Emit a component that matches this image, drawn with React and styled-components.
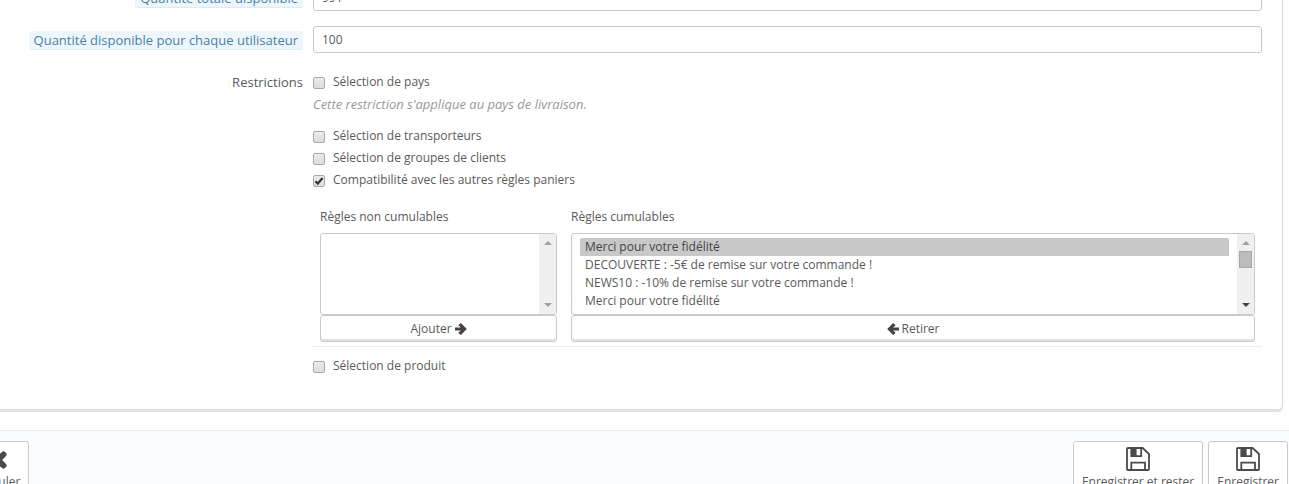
import React from "react";
import styled, { createGlobalStyle, css } from "styled-components";

const GlobalStyle = createGlobalStyle`
  *, *::before, *::after { box-sizing: border-box; }
  body {
    margin: 0;
    overflow: hidden;
    background: #fff;
    color: #5a5a5a;
    font: 12px/18px "Open Sans", "Noto Sans", sans-serif;
  }
  button, input, select { font: inherit; color: inherit; }
`;

const Page = styled.div`
  overflow: hidden;
`;

const Panel = styled.main`
  margin: -21px 6px 20px -6px;
  padding: 4px 20px 15px 6px;
  border: 1px solid #dcdcdc;
  border-radius: 5px;
  box-shadow: 0 2px 0 #e3e3e3;
`;

const FormRow = styled.div`
  display: grid;
  grid-template-columns: 302px minmax(0, 1fr);
  column-gap: 10px;
  align-items: start;
  margin-bottom: 15px;
`;

const LabelCell = styled.div`
  display: flex;
  justify-content: flex-end;
  padding-top: 5px;
  font-size: 13px;
`;

const HintLabel = styled.label`
  padding: 0 5px;
  border-bottom: 1px solid #d8edf7;
  border-radius: 3px;
  background: #edf7fb;
  color: #4a7fa5;
`;

const TextInput = styled.input`
  width: 100%;
  height: 27px;
  padding: 0 8px;
  border: 1px solid #c7cace;
  border-radius: 3px;
  background: #fff;
  outline: none;
`;

const Options = styled.div`
  min-width: 0;
  padding-top: 5px;
`;

const CheckLabel = styled.label`
  display: flex;
  align-items: center;
  gap: 8px;
  margin-bottom: 4px;
`;

const CheckBox = styled.input`
  appearance: none;
  width: 12px;
  height: 12px;
  margin: 2px 0 0;
  border: 1px solid #a9a9a9;
  border-radius: 2px;
  background: linear-gradient(#ececec, #dcdcdc);
`;

const CheckSlot = styled.span`
  display: grid;
  flex: none;
  & > * { grid-area: 1 / 1; }
  svg {
    width: 12px;
    height: 12px;
    margin-top: 2px;
    pointer-events: none;
  }
`;

const Help = styled.p`
  margin: 0 0 14px;
  color: #999;
  font-size: 13px;
  font-style: italic;
`;

const RuleColumns = styled.div`
  display: grid;
  grid-template-columns: 237fr 684fr;
  column-gap: 14px;
  margin-top: 19px;
  padding: 0 7px 4px;
  border-bottom: 1px solid #ececec;
`;

const RuleColumn = styled.div`
  display: flex;
  flex-direction: column;
  min-width: 0;
`;

const ListLabel = styled.label`
  margin-bottom: 7px;
`;

const ListFrame = styled.div`
  display: flex;
  height: 82px;
  border: 1px solid #c7cace;
  border-radius: 3px;
  background: #fff;
  overflow: hidden;
`;

const RuleList = styled.select`
  flex: 1;
  min-width: 0;
  height: 72px;
  margin: 4px 8px;
  padding: 0;
  border: 0;
  background: #fff;
  outline: none;
  scrollbar-width: none;

  option {
    min-height: 18px;
    padding: 0 5px;
    line-height: 18px;
  }
  option:checked {
    background: linear-gradient(#c8c8c8, #c8c8c8);
    color: #444;
  }
`;

const ScrollBar = styled.div`
  display: flex;
  flex-direction: column;
  align-items: center;
  justify-content: space-between;
  flex: none;
  width: 17px;
  padding: 7px 0;
  background: #f0f0f0;
`;

const ScrollArrow = styled.svg`
  width: 8px;
  height: 4px;
  color: ${(p) => (p.$active ? "#444" : "#a0a0a0")};
`;

const ScrollTrack = styled.div`
  flex: 1;
  margin: 6px 0;
`;

const ScrollThumb = styled.div`
  width: 13px;
  height: 17px;
  border: 1px solid #a8a8a8;
  background: #bcbcbc;
`;

const buttonBase = css`
  border: 1px solid #c7cace;
  border-radius: 3px;
  background: #fff;
  cursor: pointer;
`;

const MoveButton = styled.button`
  ${buttonBase}
  display: flex;
  align-items: center;
  justify-content: center;
  gap: 3px;
  width: 100%;
  height: 27px;
  padding: 0;
  box-shadow: inset 0 -2px 0 #e2e2e2;
  svg { width: 12px; height: 12px; color: #444; }
`;

const ProductRow = styled.div`
  padding-top: 10px;
`;

const Toolbar = styled.footer`
  display: flex;
  justify-content: space-between;
  padding: 10px 1px 10px 0;
  border-top: 1px solid #ececec;
  background: #fbfcfe;
`;

const ToolbarGroup = styled.div`
  display: flex;
  gap: 5px;
  margin-left: ${(p) => (p.$bleed ? "-33px" : "0")};
`;

const ToolbarButton = styled.button`
  ${buttonBase}
  display: flex;
  flex-direction: column;
  align-items: center;
  gap: 2px;
  padding: 5px 8px 4px;
  white-space: nowrap;
  svg { width: 24px; height: 24px; color: #4b4b4d; }
`;

const ArrowRight = () => (
  <svg viewBox="0 0 12 12" fill="none" stroke="currentColor" aria-hidden="true">
    <path d="M0 6H9" strokeWidth="3" />
    <path d="M4.600 1.100L9.500 6L4.600 10.900" strokeWidth="3.300" />
  </svg>
);

const ArrowLeft = () => (
  <svg viewBox="0 0 12 12" fill="none" stroke="currentColor" aria-hidden="true">
    <path d="M12 6H3" strokeWidth="3" />
    <path d="M7.400 1.100L2.500 6L7.400 10.900" strokeWidth="3.300" />
  </svg>
);

const SaveIcon = () => (
  <svg viewBox="0 0 24 24" fill="none" stroke="currentColor" strokeWidth="1.8" aria-hidden="true">
    <path d="M1 2Q1 1 2 1H16.6L23 7V22Q23 23 22 23H2Q1 23 1 22z" />
    <path d="M5.300 1V9.200H15.200V1M5.300 23V15.600H19V23" />
    <path d="M5 1h5.600v8H5z" fill="currentColor" stroke="none" />
  </svg>
);

const CancelIcon = () => (
  <svg viewBox="0 0 24 24" aria-hidden="true">
    <path d="M6.500 7.500l11 11M17.500 7.500l-11 11" stroke="currentColor" strokeWidth="6" strokeLinecap="round" />
  </svg>
);

const CheckMark = () => (
  <svg viewBox="0 0 12 12" fill="none" aria-hidden="true">
    <path d="M2.500 6.200L4.800 8.700 9.500 3" stroke="#333" strokeWidth="2.200" />
  </svg>
);

function Check({ children, defaultChecked = false }) {
  const [checked, setChecked] = React.useState(defaultChecked);
  return (
    <CheckLabel>
      <CheckSlot>
        <CheckBox type="checkbox" checked={checked} onChange={(e) => setChecked(e.target.checked)} />
        {checked && <CheckMark />}
      </CheckSlot>
      {children}
    </CheckLabel>
  );
}

function ListBox({ id, rules, selected }) {
  const [ratio, setRatio] = React.useState(0);
  const scrollable = rules.length > 4;
  const onScroll = (e) => {
    const { scrollTop, scrollHeight, clientHeight } = e.currentTarget;
    setRatio(scrollTop / Math.max(1, scrollHeight - clientHeight));
  };
  return (
    <ListFrame>
      <RuleList id={id} multiple size={4} defaultValue={selected} onScroll={onScroll}>
        {rules.map((rule) => (
          <option key={rule.id} value={rule.id}>{rule.name}</option>
        ))}
      </RuleList>
      <ScrollBar aria-hidden="true">
        <ScrollArrow viewBox="0 0 8 4" $active={ratio > 0}>
          <path d="M0 4L4 0L8 4z" fill="currentColor" />
        </ScrollArrow>
        <ScrollTrack>
          {scrollable && <ScrollThumb style={{ marginTop: Math.round(ratio * 29) }} />}
        </ScrollTrack>
        <ScrollArrow viewBox="0 0 8 4" $active={scrollable && ratio < 1}>
          <path d="M0 0L4 4L8 0z" fill="currentColor" />
        </ScrollArrow>
      </ScrollBar>
    </ListFrame>
  );
}

const ruleNames = [
  "Merci pour votre fidélité",
  "DECOUVERTE : -5€ de remise sur votre commande !",
  "NEWS10 : -10% de remise sur votre commande !",
];
const combinableRules = Array.from({ length: 12 }, (_, i) => ({
  id: String(i + 1),
  name: ruleNames[i % ruleNames.length],
}));

export default function App() {
  return (
    <Page>
      <GlobalStyle />
      <Panel>
        <FormRow>
          <LabelCell><HintLabel htmlFor="total">Quantité totale disponible</HintLabel></LabelCell>
          <TextInput id="total" defaultValue="991" />
        </FormRow>
        <FormRow>
          <LabelCell><HintLabel htmlFor="per-user">Quantité disponible pour chaque utilisateur</HintLabel></LabelCell>
          <TextInput id="per-user" defaultValue="100" />
        </FormRow>
        <FormRow role="group" aria-labelledby="restrictions">
          <LabelCell id="restrictions">Restrictions</LabelCell>
          <Options>
            <Check>Sélection de pays</Check>
            <Help>Cette restriction s'applique au pays de livraison.</Help>
            <Check>Sélection de transporteurs</Check>
            <Check>Sélection de groupes de clients</Check>
            <Check defaultChecked>Compatibilité avec les autres règles paniers</Check>
            <RuleColumns>
              <RuleColumn>
                <ListLabel htmlFor="excluded">Règles non cumulables</ListLabel>
                <ListBox id="excluded" rules={[]} selected={[]} />
                <MoveButton type="button">Ajouter <ArrowRight /></MoveButton>
              </RuleColumn>
              <RuleColumn>
                <ListLabel htmlFor="combinable">Règles cumulables</ListLabel>
                <ListBox id="combinable" rules={combinableRules} selected={["1"]} />
                <MoveButton type="button"><ArrowLeft /> Retirer</MoveButton>
              </RuleColumn>
            </RuleColumns>
            <ProductRow><Check>Sélection de produit</Check></ProductRow>
          </Options>
        </FormRow>
      </Panel>
      <Toolbar>
        <ToolbarGroup $bleed>
          <ToolbarButton type="button"><CancelIcon />Annuler</ToolbarButton>
        </ToolbarGroup>
        <ToolbarGroup>
          <ToolbarButton type="button"><SaveIcon />Enregistrer et rester</ToolbarButton>
          <ToolbarButton type="button"><SaveIcon />Enregistrer</ToolbarButton>
        </ToolbarGroup>
      </Toolbar>
    </Page>
  );
}
